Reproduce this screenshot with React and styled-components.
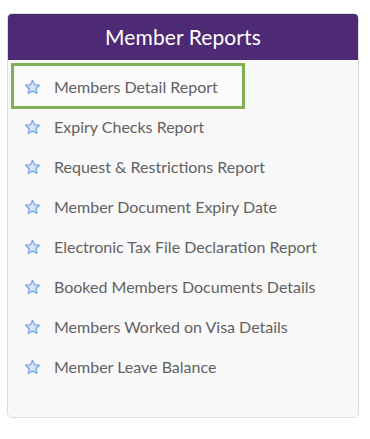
import React from "react";
import styled, { createGlobalStyle } from "styled-components";

const Global = createGlobalStyle`
  html, body { margin: 0; padding: 0; background: #ffffff; }
  body { font-family: Lato, "Open Sans", sans-serif; }
`;

const Page = styled.div`
  padding: 13px 11px 0 7px;
  width: 352px;
`;

const Card = styled.div`
  background: #f9f9f9;
  border: 1px solid #dcdcdc;
  border-radius: 5px;
  overflow: hidden;
`;

const Header = styled.div`
  background: #4f2a74;
  color: #ffffff;
  height: 47px;
  margin: -1px -1px 0 -1px;
  border-radius: 5px 5px 0 0;
  display: flex;
  align-items: center;
  justify-content: center;
  font-size: 21px;
  letter-spacing: 0.1px;
`;

const List = styled.ul`
  list-style: none;
  margin: 0;
  padding: 6px 0 31px 6px;
`;

const Item = styled.li`
  display: flex;
  align-items: center;
  gap: 13px;
  height: 40px;
  padding-left: 10px;
  box-sizing: border-box;
  width: ${(p) => (p.$active ? "228px" : "auto")};
  outline: ${(p) => (p.$active ? "3px solid #7fb055" : "none")};
  background: ${(p) => (p.$active ? "#fbfbfb" : "transparent")};
  color: #626262;
  font-size: 16px;
  line-height: 1;
  padding-top: 2px;
`;

const StarIcon = styled.svg`
  flex: none;
  width: 17px;
  height: 16px;
`;

const Star = () => (
  <StarIcon viewBox="0 0 24 23">
    <path
      d="M12 2l3 6.3 6.9.8-5.1 4.7 1.4 6.8L12 17.2l-6.2 3.4 1.4-6.8-5.1-4.7 6.9-.8z"
      fill="#d6e5f7"
      stroke="#86aee3"
      strokeWidth="2.2"
      strokeLinejoin="round"
    />
  </StarIcon>
);

const items = [
  "Members Detail Report",
  "Expiry Checks Report",
  "Request & Restrictions Report",
  "Member Document Expiry Date",
  "Electronic Tax File Declaration Report",
  "Booked Members Documents Details",
  "Members Worked on Visa Details",
  "Member Leave Balance",
];

export default function App() {
  return (
    <>
      <Global />
      <Page>
        <Card>
          <Header>Member Reports</Header>
          <List>
            {items.map((t, i) => (
              <Item key={t} $active={i === 0}>
                <Star />
                <span>{t}</span>
              </Item>
            ))}
          </List>
        </Card>
      </Page>
    </>
  );
}
